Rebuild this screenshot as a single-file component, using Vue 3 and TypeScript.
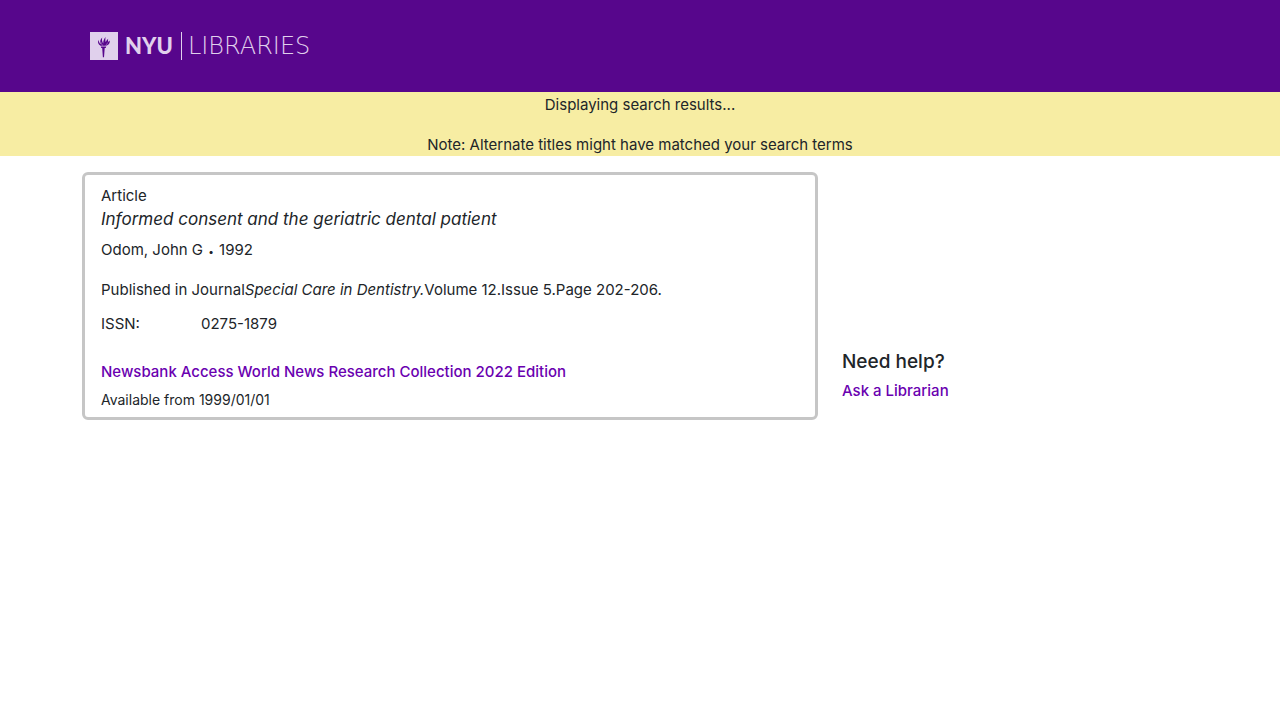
<script setup lang="ts">
interface Citation {
  kind: string
  title: string
  author: string
  year: string
  journal: string
  details: string
  issn: string
}

const citation: Citation = {
  kind: 'Article',
  title: 'Informed consent and the geriatric dental patient',
  author: 'Odom, John G',
  year: '1992',
  journal: 'Special Care in Dentistry.',
  details: 'Volume 12.Issue 5.Page 202-206.',
  issn: '0275-1879',
}
</script>

<template>
  <div class="page">
    <header class="site-header">
      <div class="container">
        <a class="logo" href="#" aria-label="NYU Libraries">
          <svg class="torch" viewBox="0 0 28 28" aria-hidden="true">
            <rect width="28" height="28" fill="#e0d0ec" />
            <g fill="#57068c">
              <path d="M10.800 14.400h5.400l-.5 1.500h-1l-.7 9.300h-1.100l-.7-9.300h-.9z" />
              <path d="M10.500 13.700C8.100 12.300 7.300 10 8.600 7.700c.1 2 .8 3.400 2.200 4.600C9.700 9.600 10.200 7.500 12.200 5.600c-.5 2.500-.1 4.300 1.100 6C13 8.900 13.900 7 15.600 4.900c-.4 2.200-.3 3.900.2 5.200.4-1.400 1.200-2.500 2.400-3.300-.3 1.400-.3 2.300.1 3.200.4-.7.800-1.200 1.500-1.600.1 2.800-1 4.500-3.800 5.400z" />
            </g>
            <path d="M11 10c.1 1.600.8 2.800 2 3.600M17.600 10.500c-.4 1.500-1.100 2.300-2 3.100" fill="none" stroke="#e0d0ec" stroke-width=".4" />
          </svg>
          <span class="nyu">NYU</span>
          <span class="rule"></span>
          <span class="libraries">LIBRARIES</span>
        </a>
      </div>
    </header>

    <div class="banner" role="status">
      <p>Displaying search results...</p>
      <p>Note: Alternate titles might have matched your search terms</p>
    </div>

    <main class="columns">
      <section class="card">
        <div>{{ citation.kind }}</div>
        <h1>{{ citation.title }}</h1>
        <p class="author">{{ citation.author }} <span class="dot">•</span> {{ citation.year }}</p>
        <p class="published">Published in Journal<i>{{ citation.journal }}</i>{{ citation.details }}</p>
        <dl>
          <dt>ISSN:</dt>
          <dd>{{ citation.issn }}</dd>
        </dl>
        <a class="link" href="#">Newsbank Access World News Research Collection 2022 Edition</a>
        <p class="coverage">Available from 1999/01/01</p>
      </section>
      <aside class="help">
        <h2>Need help?</h2>
        <a class="link" href="#">Ask a Librarian</a>
      </aside>
    </main>
  </div>
</template>

<style>
body {
  margin: 0;
  background: #fff;
}
</style>

<style scoped>
.page {
  color: #212529;
  font-family: Inter, "Liberation Sans", sans-serif;
  font-size: 15px;
  line-height: 24px;
}

p,
h1,
h2,
dl,
dd {
  margin: 0;
}

.container,
.columns {
  box-sizing: border-box;
  max-width: 1140px;
  margin: 0 auto;
}

.container {
  padding: 0 12px;
}

.site-header {
  background: #57068c;
  padding: 32px 0;
}

.logo {
  display: flex;
  align-items: center;
  height: 28px;
  margin-left: 8px;
  color: #e0d0ec;
  text-decoration: none;
  white-space: nowrap;
}

.torch {
  width: 28px;
  height: 28px;
}

.nyu {
  margin-left: 7px;
  font-family: Lato, sans-serif;
  font-size: 22px;
  font-weight: 900;
}

.rule {
  width: 1px;
  height: 28px;
  margin: 0 6px 0 8px;
  background: #e0d0ec;
}

.libraries {
  font-family: "DejaVu Sans", sans-serif;
  font-size: 24px;
  font-weight: 200;
}

.banner {
  display: grid;
  gap: 18px;
  padding-top: 2px;
  background: #f7eda3;
  line-height: 22px;
  text-align: center;
}

.columns {
  display: grid;
  grid-template-columns: 2fr 1fr;
  padding-top: 16px;
}

.card {
  margin: 0 12px;
  padding: 9px 16px 7px;
  border: 3px solid #c6c6c6;
  border-radius: 6px;
}

h1 {
  font-size: 17px;
  font-style: italic;
  font-weight: 400;
  line-height: 22px;
}

.author {
  margin-top: 8px;
}

.dot {
  padding: 0 1px;
  font-size: 10px;
  line-height: 1;
  vertical-align: middle;
}

.published {
  margin-top: 16px;
}

dl {
  display: grid;
  grid-template-columns: 100px 1fr;
  margin: 10px 0 24px;
}

.link {
  color: #6a00b0;
  font-weight: 500;
  text-decoration: none;
}

.coverage {
  margin-top: 5px;
  font-size: 14px;
  line-height: 21px;
}

.help {
  align-self: end;
  margin: 0 12px;
  padding-bottom: 17px;
}

h2 {
  margin-bottom: 5px;
  font-size: 19px;
  font-weight: 500;
}
</style>
